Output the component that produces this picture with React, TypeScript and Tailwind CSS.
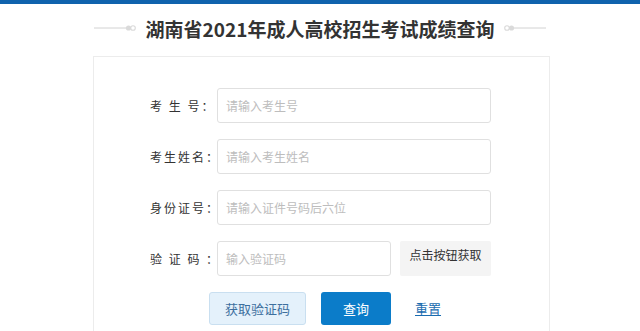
import React from "react";

function Deco({ flip }: { flip?: boolean }) {
  return (
    <svg width="42" height="10" viewBox="0 0 42 10" className={flip ? "-scale-x-100" : ""}>
      <line x1="0" y1="5" x2="32" y2="5" stroke="#d2d2d2" strokeWidth="1" />
      <circle cx="34.5" cy="5" r="2.6" fill="#dadada" />
      <circle cx="39" cy="5" r="2.3" fill="none" stroke="#dadada" strokeWidth="1.1" />
    </svg>
  );
}

function Label({ text }: { text: string }) {
  return (
    <div className="w-[67px] shrink-0 text-[12px] tracking-[2px] text-[#333] whitespace-pre">{text}</div>
  );
}

function Row({ label, placeholder }: { label: string; placeholder: string }) {
  return (
    <div className="flex items-center">
      <Label text={label} />
      <div className="w-[274px] h-[35px] border border-[#e0e0e0] rounded-[3px] bg-white flex items-center pl-[8px] text-[12px] text-[#bdbdbd]">
        {placeholder}
      </div>
    </div>
  );
}

export default function App() {
  return (
    <div
      className="w-[640px] h-[331px] bg-white overflow-hidden"
      style={{ fontFamily: '"Noto Sans CJK SC", "Noto Sans", sans-serif' }}
    >
      <div className="h-[4px] bg-[#0f63ad]" />
      <div className="h-[52px] flex items-center justify-center gap-[10px] pb-[4px]">
        <Deco />
        <div className="text-[19px] font-bold text-[#333] leading-none">湖南省2021年成人高校招生考试成绩查询</div>
        <Deco flip />
      </div>
      <div className="w-[457px] ml-[93px] h-[300px] border border-[#ececec] pt-[31px] pl-[56px]">
        <div className="flex flex-col gap-[16px]">
          <Row label="考 生 号：" placeholder="请输入考生号" />
          <Row label="考生姓名：" placeholder="请输入考生姓名" />
          <Row label="身份证号：" placeholder="请输入证件号码后六位" />
          <div className="flex items-center">
            <Label text="验 证 码 ：" />
            <div className="w-[174px] h-[35px] border border-[#e0e0e0] rounded-[3px] bg-white flex items-center pl-[8px] text-[12px] text-[#bdbdbd]">
              输入验证码
            </div>
            <div className="ml-[9px] w-[91px] h-[35px] bg-[#f4f4f4] rounded-[2px] flex items-center justify-center pb-[7px] text-[12px] text-[#333]">
              点击按钮获取
            </div>
          </div>
        </div>
        <div className="flex items-center mt-[16px] ml-[59px]">
          <div className="w-[97px] h-[33px] bg-[#e4f1fb] border border-[#c9dff0] rounded-[3px] flex items-center justify-center text-[13px] text-[#3d6f9e]">
            获取验证码
          </div>
          <div className="ml-[15px] w-[70px] h-[33px] bg-[#0b7cc9] rounded-[3px] flex items-center justify-center text-[13px] text-white">
            查询
          </div>
          <div className="ml-[24px] text-[13px] text-[#1b6cb0] underline">重置</div>
        </div>
      </div>
    </div>
  );
}
